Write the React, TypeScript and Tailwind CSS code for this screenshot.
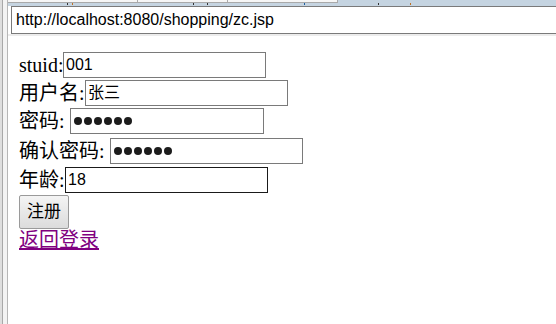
import React from "react";

const serif = { fontFamily: '"Liberation Serif", "Noto Sans CJK SC", serif' };
const sans = { fontFamily: '"Liberation Sans", "Noto Sans CJK SC", sans-serif' };

const Field = ({
  label,
  labelW,
  inputW,
  value,
  dots,
  focused,
  className = "",
}: {
  label: string;
  labelW: string;
  inputW: string;
  value: string;
  dots?: boolean;
  focused?: boolean;
  className?: string;
}) => (
  <div className={`flex h-[28px] items-center ${className}`}>
    <span className={`${labelW} text-[20px] leading-[23px] text-black whitespace-nowrap`} style={serif}>
      {label}
    </span>
    <div
      className={`${inputW} h-[26px] flex items-center border bg-white pl-[2px] ${
        focused ? "border-[#1a1a1a]" : "border-[#7a7a7a]"
      }`}
    >
      {dots ? (
        <div className="flex gap-[2px] pl-[1px]">
          {[0, 1, 2, 3, 4, 5].map((i) => (
            <span key={i} className="w-[8px] h-[8px] rounded-full bg-[#1c1c1c]" />
          ))}
        </div>
      ) : (
        <span className="text-[16px] text-black leading-none" style={sans}>
          {value}
        </span>
      )}
    </div>
  </div>
);

export default function App() {
  return (
    <div className="w-[556px] h-[324px] bg-white flex overflow-hidden">
      {/* left window frame */}
      <div className="flex h-full shrink-0">
        <div className="w-[2px] bg-[#dedede]" />
        <div className="w-[1px] bg-[#a8a8a8]" />
        <div className="w-[4px] bg-[#f3f3f3]" />
        <div className="w-[1px] bg-[#b6b6b6]" />
      </div>

      <div className="flex-1 flex flex-col min-w-0">
        {/* tab strip */}
        <div className="h-[6px] bg-[#c5d4e1] flex flex-col">
          <div className="flex h-[3px]">
            <div className="w-[130px] bg-[#f6f6f6] border-b border-r border-[#a9a9a9]" />
            <div className="w-[90px] bg-[#f6f6f6] border-b border-r border-[#a9a9a9]" />
            <div className="w-[110px] bg-[#f6f6f6] border-b border-r border-[#a9a9a9]" />
          </div>
          <svg width="548" height="3" className="block">
            <rect x="59" y="0" width="1" height="2" fill="#333" />
            <rect x="64" y="0" width="1" height="2" fill="#c07020" />
            <rect x="185" y="0" width="1" height="2" fill="#333" />
            <rect x="199" y="0" width="1" height="2" fill="#333" />
            <rect x="296" y="0" width="1" height="2" fill="#2060a0" />
            <rect x="370" y="0" width="1" height="2" fill="#333" />
            <rect x="402" y="0" width="1" height="2" fill="#c07020" />
          </svg>
        </div>

        {/* address bar */}
        <div className="pl-[3px] bg-white">
          <div className="h-[28px] border-y border-l border-[#7a7a7a] flex items-center pl-[4px]">
            <span className="text-[16px] text-black" style={sans}>
              http://localhost:8080/shopping/zc.jsp
            </span>
          </div>
        </div>
        <div className="h-[2px] bg-[#ececec]" />

        {/* page content */}
        <div className="flex flex-col pl-[11px] pt-[15px]">
          <Field label="stuid:" labelW="w-[44px]" inputW="w-[203px]" value="001" />
          <Field label="用户名:" labelW="w-[66px]" inputW="w-[203px]" value="张三" />
          <Field label="密码:" labelW="w-[51px]" inputW="w-[194px]" value="" dots />
          <Field label="确认密码:" labelW="w-[91px]" inputW="w-[193px]" value="" dots className="mt-[2px]" />
          <Field label="年龄:" labelW="w-[46px]" inputW="w-[203px]" value="18" focused className="mt-[1px]" />
          <div className="mt-[1px]">
            <button
              className="w-[50px] h-[34px] border border-[#9a9a9a] rounded-[2px] bg-gradient-to-b from-[#f4f4f4] to-[#dcdcdc] text-[17px] text-black"
              style={sans}
            >
              注册
            </button>
          </div>
          <div className="leading-[23px]">
            <a href="#" className="text-[20px] text-[#800080] underline" style={serif}>
              返回登录
            </a>
          </div>
        </div>
      </div>
    </div>
  );
}
